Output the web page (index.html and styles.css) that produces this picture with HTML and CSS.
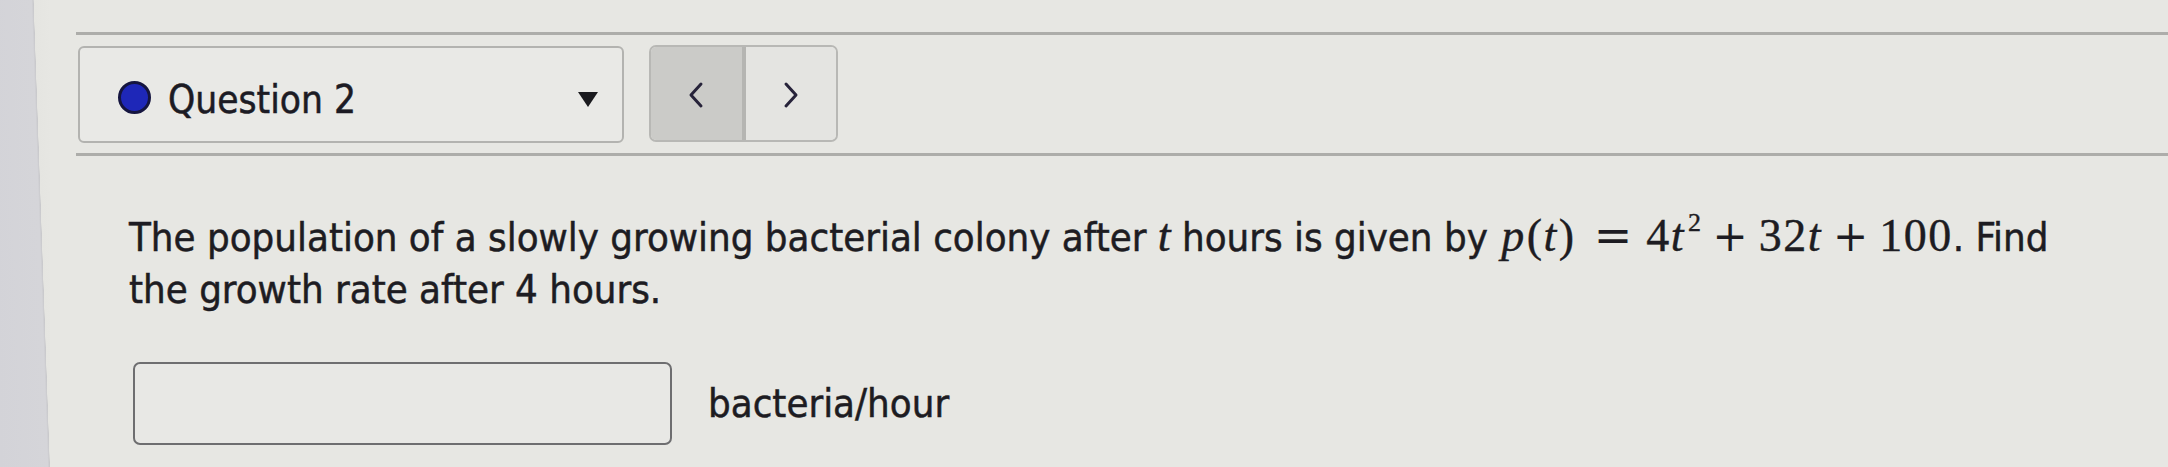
FILE: index.html
```html
<!DOCTYPE html>
<html lang="en">
<head>
<meta charset="utf-8">
<title>Question 2</title>
<link rel="stylesheet" href="styles.css">
</head>
<body>
<div class="screen">
  <div class="bezel"></div>
  <main class="page">
    <div class="rule rule-top"></div>
    <div class="toolbar">
      <div class="qselect">
        <span class="dot"></span>
        <span class="qlabel">Question 2</span>
        <span class="caret"></span>
      </div>
      <div class="nav">
        <button class="navbtn prev" aria-label="Previous">
          <svg width="18" height="28" viewBox="0 0 18 28"><polyline points="14,3 4,14 14,25" fill="none" stroke="#27233a" stroke-width="3" stroke-linecap="round" stroke-linejoin="round"/></svg>
        </button>
        <button class="navbtn next" aria-label="Next">
          <svg width="18" height="28" viewBox="0 0 18 28"><polyline points="4,3 14,14 4,25" fill="none" stroke="#27233a" stroke-width="3" stroke-linecap="round" stroke-linejoin="round"/></svg>
        </button>
      </div>
    </div>
    <div class="rule rule-bottom"></div>
    <section class="question">
      <p class="prompt">The population of a slowly growing bacterial colony after <span class="mi">t</span> hours is given by <span class="math"><span class="mi">p</span><span class="mo">(</span><span class="mi">t</span><span class="mo">)</span><span class="rel">=</span>4<span class="mi">t</span><span class="sup">2</span><span class="bin">+</span>32<span class="mi">t</span><span class="bin">+</span>100</span>. Find the growth rate after 4 hours.</p>
      <div class="answer">
        <div class="field"></div>
        <span class="unit">bacteria/hour</span>
      </div>
    </section>
  </main>
</div>
</body>
</html>
```
FILE: styles.css
```css
html, body {
  margin: 0;
  padding: 0;
}
body {
  background: #e7e7e3;
  color: #1d1c22;
  font-family: "DejaVu Sans Condensed", "DejaVu Sans", sans-serif;
  font-stretch: condensed;
}
.screen {
  display: flex;
  width: 2168px;
  height: 467px;
  overflow: hidden;
}
.bezel {
  flex: 0 0 50px;
  background: linear-gradient(88deg, #d3d3d8 0%, #d5d5d9 72%, #c9c9cc 74.9%, #e5e5e1 75.5%, #e7e7e3 100%);
}
.page {
  flex: 1;
  padding: 32px 0 0 26px;
  background: #e7e7e3;
}
.rule {
  height: 3px;
  background: #adadaa;
}
.toolbar {
  display: flex;
  align-items: flex-start;
  gap: 25px;
  margin: 11px 0 0 2px;
}
.qselect {
  display: flex;
  align-items: center;
  box-sizing: border-box;
  width: 546px;
  height: 97px;
  padding: 4px 0 0 38px;
  border: 2px solid #b3b3b0;
  border-radius: 6px;
  background: #e9e9e6;
}
.dot {
  box-sizing: border-box;
  width: 33px;
  height: 33px;
  border-radius: 50%;
  background: #1e27b8;
  border: 3px solid #15153f;
  margin-top: 2px;
}
.qlabel {
  margin-left: 17px;
  font-size: 38.5px;
  line-height: 1;
  color: #1c1b24;
  padding-top: 8px;
  -webkit-text-stroke: 0.5px #1c1b24;
}
.caret {
  margin-left: auto;
  margin-right: 24px;
  margin-top: 6px;
  width: 0;
  height: 0;
  border-left: 10px solid transparent;
  border-right: 10px solid transparent;
  border-top: 15px solid #1a1a1e;
}
.nav {
  display: flex;
  box-sizing: border-box;
  width: 189px;
  height: 97px;
  border: 2px solid #b8b8b5;
  border-radius: 7px;
  overflow: hidden;
  margin-top: -1px;
}
.navbtn {
  flex: 1;
  display: flex;
  align-items: center;
  justify-content: center;
  border: 0;
  margin: 0;
  padding: 2px 0 0 0;
}
.prev {
  background: #cbcbc8;
  border-right: 4px solid #b5b5b2;
}
.next {
  background: #e4e4e1;
}
.rule-bottom {
  margin-top: 10px;
}
.question {
  padding: 0 68px 0 53px;
}
.prompt {
  margin: 55px 0 0 0;
  font-size: 39.8px;
  line-height: 52px;
  color: #1d1c22;
  -webkit-text-stroke: 0.5px #1d1c22;
}
.mi {
  font-family: "Liberation Serif", "DejaVu Serif", serif;
  font-style: italic;
  font-stretch: normal;
  font-size: 46px;
  line-height: 1;
}
.math {
  font-family: "Liberation Serif", "DejaVu Serif", serif;
  font-stretch: normal;
  font-size: 46px;
  line-height: 1;
  letter-spacing: 1.5px;
  margin-left: 2px;
  -webkit-text-stroke: 0.4px #1d1c22;
}
.math .mi {
  padding-right: 1px;
}
.mo {
  font-style: normal;
}
.rel {
  font-family: "DejaVu Serif", serif;
  font-size: 46px;
  letter-spacing: 0;
  margin: 0 14px 0 18px;
  -webkit-text-stroke: 0;
}
.bin {
  font-family: "DejaVu Serif", serif;
  font-size: 42px;
  letter-spacing: 0;
  margin: 0 11px 0 10px;
  -webkit-text-stroke: 0;
}
.sup {
  font-size: 26px;
  line-height: 0;
  vertical-align: 20px;
  margin-left: 2px;
}
.answer {
  display: flex;
  align-items: center;
  gap: 36px;
  margin-top: 47px;
  margin-left: 4px;
}
.field {
  box-sizing: border-box;
  width: 539px;
  height: 83px;
  border: 2px solid #6e6e70;
  border-radius: 7px;
  background: #e8e8e5;
}
.unit {
  font-size: 39.8px;
  line-height: 1;
  color: #1d1c22;
  -webkit-text-stroke: 0.5px #1d1c22;
}
```
